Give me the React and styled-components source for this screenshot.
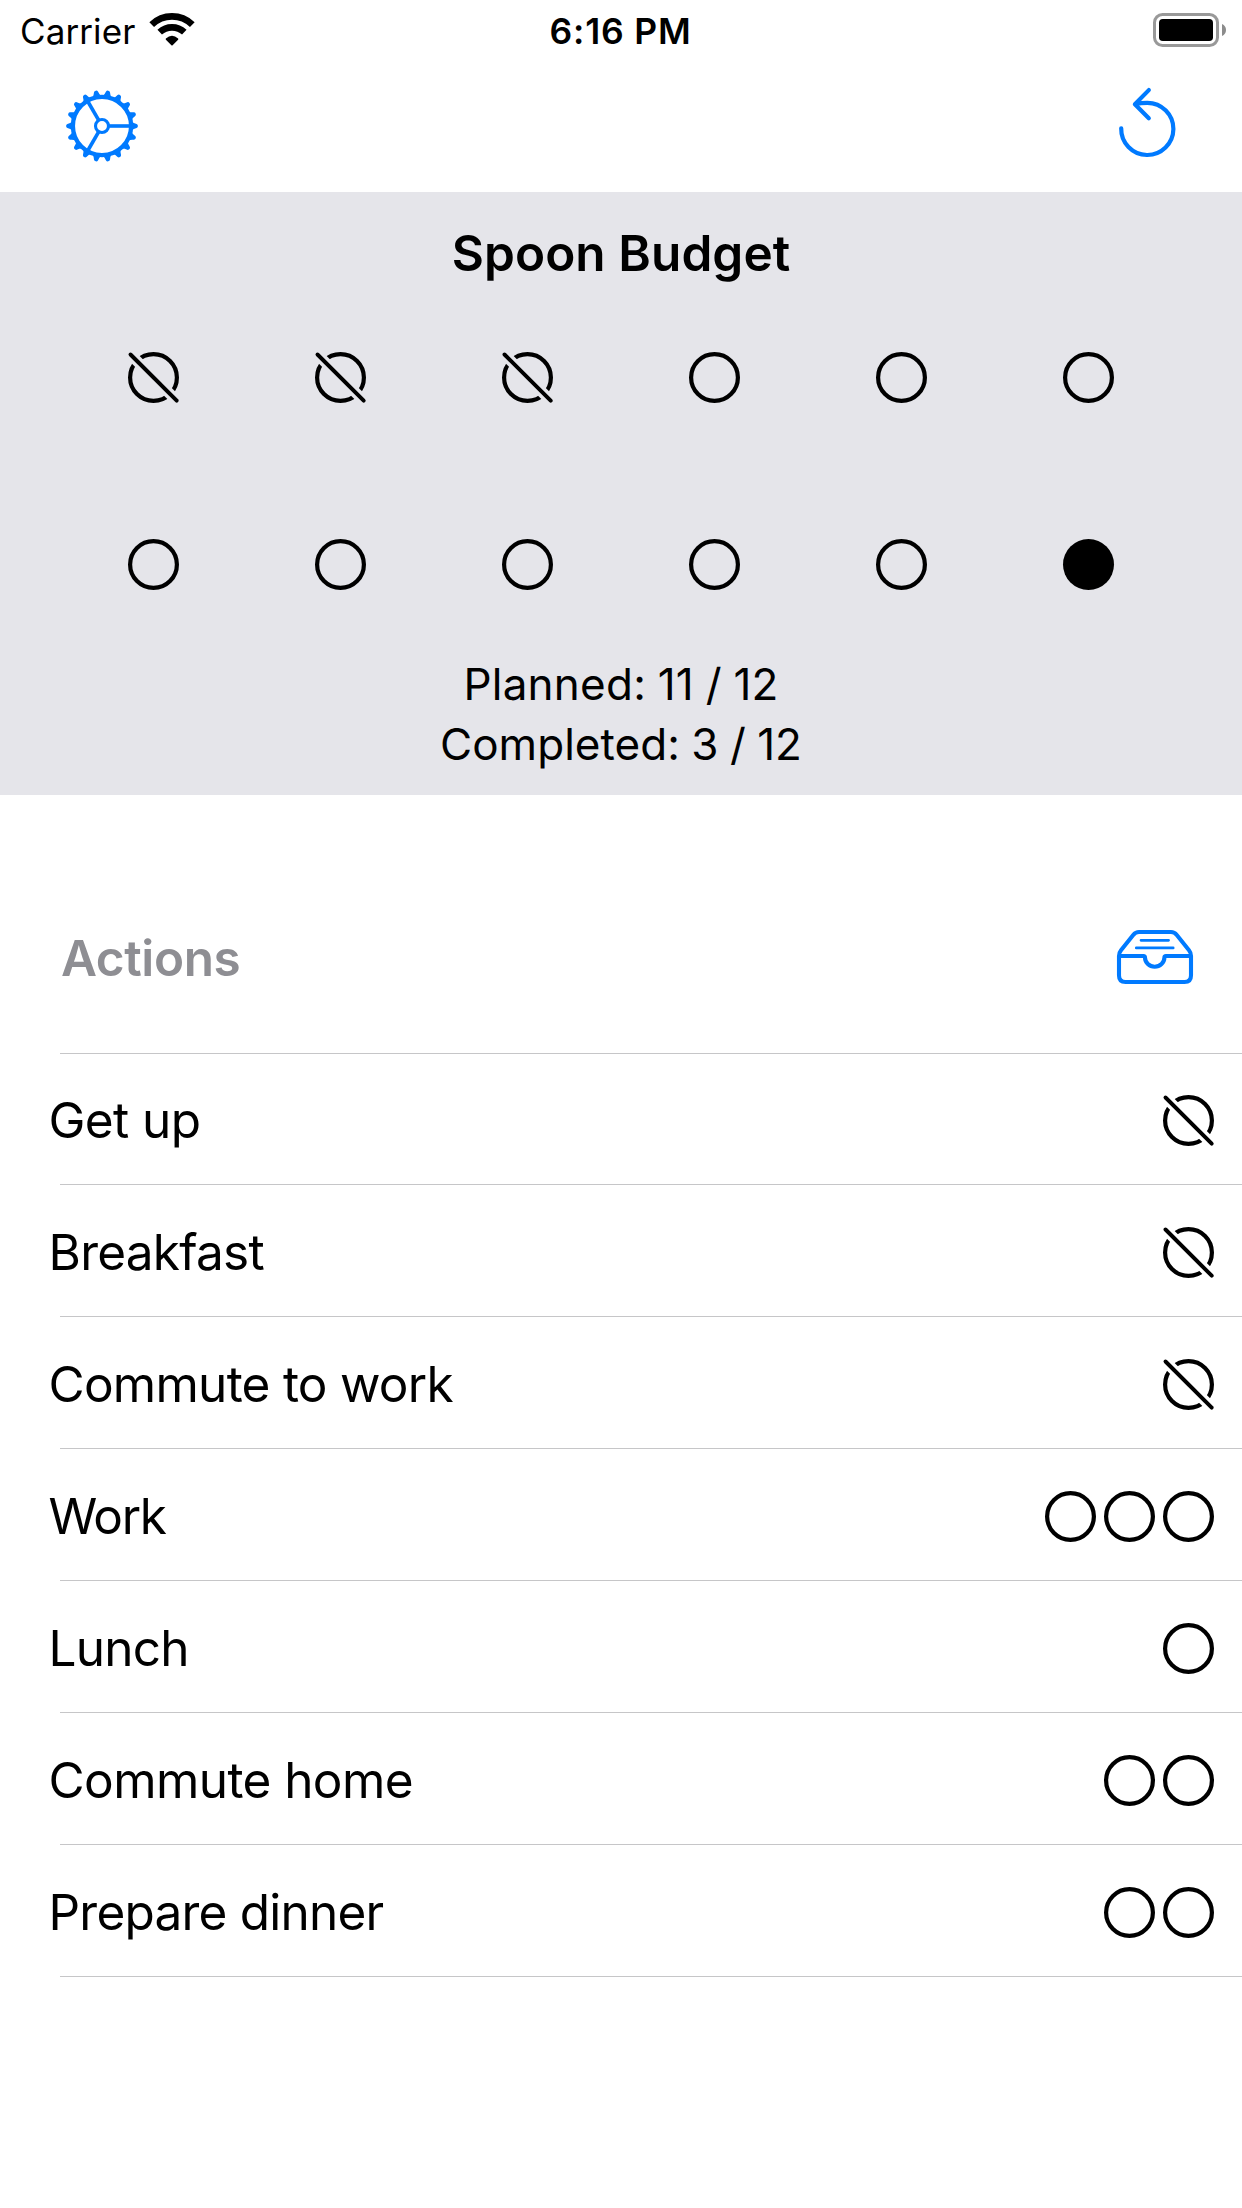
import React, { useId } from "react";
import styled, { createGlobalStyle } from "styled-components";

const GlobalStyle = createGlobalStyle`
  *, *::before, *::after { box-sizing: border-box; }
  body {
    margin: 0;
    background: #ffffff;
    color: #000000;
    font-family: Inter, "Liberation Sans", sans-serif;
  }
  svg { display: block; flex: none; overflow: visible; }
`;

const Screen = styled.main`
  display: flex;
  flex-direction: column;
  width: 1242px;
  height: 2208px;
  background: #ffffff;
  overflow: hidden;
`;

const StatusBar = styled.header`
  display: grid;
  grid-template-columns: 1fr auto 1fr;
  align-items: start;
  height: 60px;
  padding: 10px 21px 0 20px;
`;

const Carrier = styled.div`
  display: flex;
  align-items: flex-start;
  gap: 14px;
  font-size: 35px;
  line-height: 42px;
  letter-spacing: 0.1px;

  svg { margin-top: 3px; }
`;

const Clock = styled.time`
  font-size: 35.5px;
  font-weight: 600;
  line-height: 43px;
  letter-spacing: 0.8px;
`;

const BatterySlot = styled.div`
  justify-self: end;
  margin-right: -5px;
  padding-top: 3px;
`;

const Toolbar = styled.nav`
  display: flex;
  justify-content: space-between;
  align-items: flex-start;
  height: 132px;
  padding: 28px 66px 0;
`;

const IconButton = styled.button`
  display: block;
  padding: 0;
  border: 0;
  background: none;
  color: #007aff;
  margin-top: ${(p) => p.$drop || 0}px;
`;

const BudgetPanel = styled.section`
  display: flex;
  flex-direction: column;
  height: 603px;
  padding: 31px 60px 0;
  background: #e5e5ea;
`;

const PanelTitle = styled.h1`
  margin: 0 0 1px;
  font-size: 49.5px;
  font-weight: 600;
  line-height: 60px;
  letter-spacing: 0.08px;
  text-align: center;
`;

const SpoonGrid = styled.div`
  display: grid;
  grid-template-columns: repeat(6, 187px);
  grid-auto-rows: 187px;
  place-items: center;
`;

const Totals = styled.div`
  margin-top: -4px;
`;

const Total = styled.p`
  margin: 0;
  font-size: 44px;
  line-height: 60px;
  letter-spacing: ${(p) => p.$tracking}px;
  word-spacing: -1px;
  text-align: center;
`;

const ListHeader = styled.div`
  display: flex;
  justify-content: space-between;
  align-items: flex-start;
  height: 258px;
  padding: 133px 49px 0 61px;
`;

const ListTitle = styled.h2`
  margin: 0;
  color: #8e8e93;
  font-size: 49.5px;
  font-weight: 600;
  line-height: 60px;
  letter-spacing: -0.4px;
`;

const Divider = styled.div`
  flex: none;
  height: 1px;
  margin-left: 60px;
  background: #c6c6c8;
`;

const ActionRow = styled.div`
  display: flex;
  justify-content: space-between;
  align-items: center;
  height: ${(p) => (p.$first ? 130 : 131)}px;
  padding: ${(p) => (p.$first ? 3 : 4)}px 28px 0 48.5px;
`;

const ActionName = styled.span`
  margin-bottom: 1px;
  font-size: 49.5px;
  line-height: 60px;
  letter-spacing: ${(p) => p.$tracking}px;
  white-space: nowrap;
`;

const Cost = styled.div`
  display: flex;
  gap: 8px;
`;

function Spoon({ state }) {
  const maskId = useId();
  return (
    <svg width="51" height="51" viewBox="-25.5 -25.5 51 51">
      {state === "full" && <circle r="25.5" />}
      {state === "open" && (
        <circle r="23.4" fill="none" stroke="#000" strokeWidth="4.2" />
      )}
      {state === "spent" && (
        <>
          <mask id={maskId} maskUnits="userSpaceOnUse" x="-26" y="-26" width="52" height="52">
            <rect x="-26" y="-26" width="52" height="52" fill="#fff" />
            <path d="M-30-30 30 30" stroke="#000" strokeWidth="10.8" />
          </mask>
          <circle r="23.4" fill="none" stroke="#000" strokeWidth="4.2" mask={`url(#${maskId})`} />
          <path d="M-23-23 23.2 23.2" stroke="#000" strokeWidth="3.9" strokeLinecap="round" />
        </>
      )}
    </svg>
  );
}

function WifiIcon() {
  return (
    <svg width="46" height="33" viewBox="-23 -32.5 46 33">
      <g fill="none" stroke="#000" strokeWidth="6.7">
        <path d="M-20.3-20.9A29.15 29.15 0 0 1 20.3-20.9" />
        <path d="M-12.3-13.4A18.2 18.2 0 0 1 12.3-13.4" />
      </g>
      <path d="M-6.1-6.9Q0-12.7 6.1-6.9Q6.6-6.3 6.1-5.8L.6-.2Q0 .4-.6-.2L-6.1-5.8Q-6.6-6.3-6.1-6.9Z" />
    </svg>
  );
}

function BatteryIcon() {
  return (
    <svg width="73" height="34" viewBox="0 0 73 34">
      <rect x="1.5" y="1.5" width="63" height="31" rx="8" fill="none" stroke="#999" strokeWidth="3" />
      <rect x="6" y="6" width="54" height="22" rx="3.8" />
      <path d="M69 11Q73 12.8 73 17T69 23Z" fill="#8c8c8c" />
    </svg>
  );
}

const teeth = Array.from({ length: 18 }, (_, i) => i * 20);

function GearIcon() {
  return (
    <svg width="72" height="72" viewBox="-36 -36 72 72">
      <g fill="none" stroke="currentColor" strokeWidth="3.6">
        <circle r="29.1" strokeWidth="4.3" />
        <circle r="6.5" strokeWidth="3.1" />
        {[0, 120, 240].map((a) => (
          <path key={a} d="M7 0H28" transform={`rotate(${a})`} />
        ))}
      </g>
      <g fill="currentColor">
        {teeth.map((a) => (
          <path
            key={a}
            d="M30-4.2Q31.4-2.9 34.6-2Q35.9-1.5 35.9 0T34.6 2Q31.4 2.9 30 4.2Z"
            transform={`rotate(${a})`}
          />
        ))}
      </g>
    </svg>
  );
}

function ResetIcon() {
  return (
    <svg width="57" height="69" viewBox="0 0 57 69">
      <g fill="none" stroke="currentColor" strokeWidth="4.2" strokeLinecap="round" strokeLinejoin="round">
        <path d="M2.2 40.3A26.1 26.1 0 1 0 28.3 14.8Q21.5 14.8 16.4 16.2" />
        <path d="M29.8 2.1 15.9 16.2 29.8 30.3" />
      </g>
    </svg>
  );
}

function TrayIcon() {
  return (
    <svg width="76" height="54" viewBox="0 0 76 54">
      <g fill="none" stroke="currentColor" strokeWidth="4.1" strokeLinejoin="round">
        <path d="M2 26V45.5Q2 52 8.5 52H67.5Q74 52 74 45.5V26Q74 22.6 72 20.2L59.8 5Q57.4 2 54 2H22Q18.6 2 16.2 5L4 20.2Q2 22.6 2 26Z" />
        <path d="M2 26H26.4Q28 26 28 27.6A9.7 9.2 0 0 0 47.4 27.6Q47.4 26 49 26H74" />
      </g>
      <path d="M24 10.3H51.6M19.3 17.9H56.2" stroke="currentColor" strokeWidth="2.7" strokeLinecap="round" />
    </svg>
  );
}

const spoons = [
  "spent", "spent", "spent", "open", "open", "open",
  "open", "open", "open", "open", "open", "full",
];

const actions = [
  { name: "Get up", cost: ["spent"], tracking: -0.6 },
  { name: "Breakfast", cost: ["spent"], tracking: -0.75 },
  { name: "Commute to work", cost: ["spent"], tracking: -0.74 },
  { name: "Work", cost: ["open", "open", "open"], tracking: -1.4 },
  { name: "Lunch", cost: ["open"], tracking: -0.75 },
  { name: "Commute home", cost: ["open", "open"], tracking: -0.58 },
  { name: "Prepare dinner", cost: ["open", "open"], tracking: -0.77 },
];

export default function App() {
  return (
    <>
      <GlobalStyle />
      <Screen>
        <StatusBar>
          <Carrier>
            <span>Carrier</span>
            <WifiIcon />
          </Carrier>
          <Clock>6:16 PM</Clock>
          <BatterySlot>
            <BatteryIcon />
          </BatterySlot>
        </StatusBar>
        <Toolbar>
          <IconButton aria-label="Settings" $drop={2}>
            <GearIcon />
          </IconButton>
          <IconButton aria-label="Reset">
            <ResetIcon />
          </IconButton>
        </Toolbar>
        <BudgetPanel>
          <PanelTitle>Spoon Budget</PanelTitle>
          <SpoonGrid>
            {spoons.map((state, i) => (
              <Spoon key={i} state={state} />
            ))}
          </SpoonGrid>
          <Totals>
            <Total $tracking={0.25}>Planned: 11 / 12</Total>
            <Total $tracking={0.03}>Completed: 3 / 12</Total>
          </Totals>
        </BudgetPanel>
        <ListHeader>
          <ListTitle>Actions</ListTitle>
          <IconButton aria-label="Open tray" $drop={2}>
            <TrayIcon />
          </IconButton>
        </ListHeader>
        <Divider />
        {actions.map(({ name, cost, tracking }, i) => (
          <React.Fragment key={name}>
            <ActionRow $first={i === 0}>
              <ActionName $tracking={tracking}>{name}</ActionName>
              <Cost>
                {cost.map((state, n) => (
                  <Spoon key={n} state={state} />
                ))}
              </Cost>
            </ActionRow>
            <Divider />
          </React.Fragment>
        ))}
      </Screen>
    </>
  );
}
